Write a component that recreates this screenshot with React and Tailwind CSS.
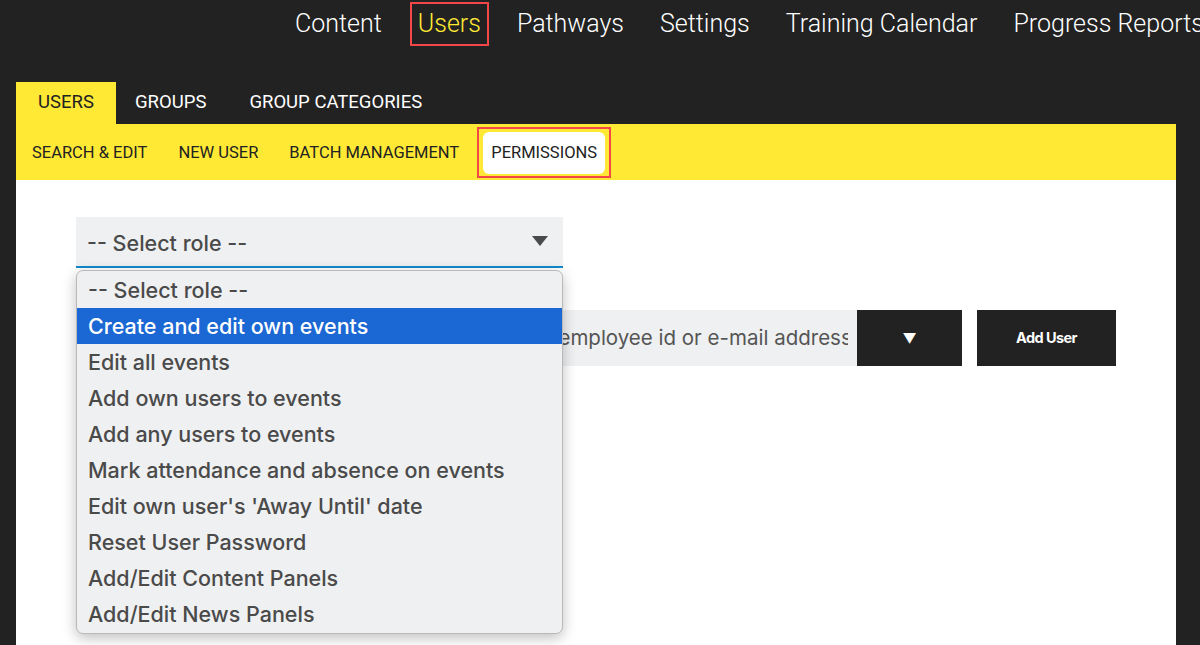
import React from 'react';

const topNav = ['Content', 'Users', 'Pathways', 'Settings', 'Training Calendar', 'Progress Reports'];
const subNav = ['SEARCH & EDIT', 'NEW USER', 'BATCH MANAGEMENT', 'PERMISSIONS'];
const roles = [
  '-- Select role --',
  'Create and edit own events',
  'Edit all events',
  'Add own users to events',
  'Add any users to events',
  'Mark attendance and absence on events',
  "Edit own user's 'Away Until' date",
  'Reset User Password',
  'Add/Edit Content Panels',
  'Add/Edit News Panels',
];

export default function App() {
  return (
    <div className="w-[1200px] h-[645px] overflow-hidden bg-[#222222] font-['Roboto',sans-serif]">
      {/* Top navigation */}
      <nav className="h-[82px] flex items-start pt-[4px] pl-[289px] gap-[24px] whitespace-nowrap overflow-hidden">
        {topNav.map((item) => (
          <a
            key={item}
            className={`h-[40px] flex items-center px-[6px] pb-[1px] text-[25px] font-light ${
              item === 'Users' ? 'text-[#ffe935] outline-2 outline-[#f44848]' : 'text-white'
            }`}
          >
            {item}
          </a>
        ))}
      </nav>

      <div className="ml-[16px] mr-[24px]">
        {/* Tabs */}
        <div className="h-[42px] flex items-stretch text-[18.5px]">
          <div className="w-[100px] bg-[#ffe935] text-[#222] flex items-center justify-center pb-[1px]">USERS</div>
          <div className="px-[19px] text-white flex items-center pb-[1px]">GROUPS</div>
          <div className="px-[24px] text-white flex items-center pb-[1px]">GROUP CATEGORIES</div>
        </div>

        {/* Sub navigation */}
        <div className="h-[56px] bg-[#ffe935] flex items-center pl-[16px] gap-[31px] text-[16.5px] text-[#222]">
          {subNav.map((item) =>
            item === 'PERMISSIONS' ? (
              <div key={item} className="border-2 border-[#f44848] pt-[3px] pb-[2px] px-[4px] -ml-[13px]">
                <div className="bg-white rounded-[6px] h-[42px] px-[8px] pt-[1px] flex items-center">{item}</div>
              </div>
            ) : (
              <span key={item} className="pt-[2px]">{item}</span>
            )
          )}
        </div>

        {/* Content */}
        <div className="h-[470px] bg-white pt-[37px] pl-[60px] relative font-['Inter',sans-serif]">
          <div className="w-[487px] h-[51px] bg-[#eff0f1] border-b-2 border-[#1189c9] flex items-center justify-between pl-[11px] pr-[15px] text-[21.5px] font-medium text-[#4a4a4a]">
            <span className="pt-[3px]">-- Select role --</span>
            <svg width="16" height="11" viewBox="0 0 16 11">
              <path d="M0 0H16L8 10Z" fill="#4a4a4a" />
            </svg>
          </div>

          <div className="mt-[42px] flex items-center">
            <div className="w-[781px] h-[56px] bg-[#eff0f1] flex items-center pl-[12px] pr-[9px] text-[20.5px] text-[#555] whitespace-nowrap">
              <div className="overflow-hidden flex-1">
                <span className="pl-[302px]">Search by name, employee id or e-mail address</span>
              </div>
            </div>
            <div className="w-[105px] h-[56px] bg-[#222] flex items-center justify-center text-white text-[14px]">▼</div>
            <button className="ml-[15px] w-[139px] h-[56px] bg-[#222] text-white text-[14.5px] font-bold tracking-[-0.04em]">
              Add User
            </button>
          </div>

          {/* Open dropdown list */}
          <ul className="absolute left-[60px] top-[90px] w-[487px] bg-[#eff0f1] border border-[#b9b9b9] rounded-[7px] shadow-[0_4px_14px_rgba(0,0,0,0.25)] py-[1px] text-[21.5px] font-medium text-[#4a4a4a]">
            {roles.map((r, i) => (
              <li
                key={r}
                className={`h-[36px] flex items-center pl-[11px] whitespace-nowrap ${
                  i === 1 ? 'bg-[#1b67d3] text-white' : ''
                }`}
              >
                {r}
              </li>
            ))}
          </ul>
        </div>
      </div>
    </div>
  );
}
